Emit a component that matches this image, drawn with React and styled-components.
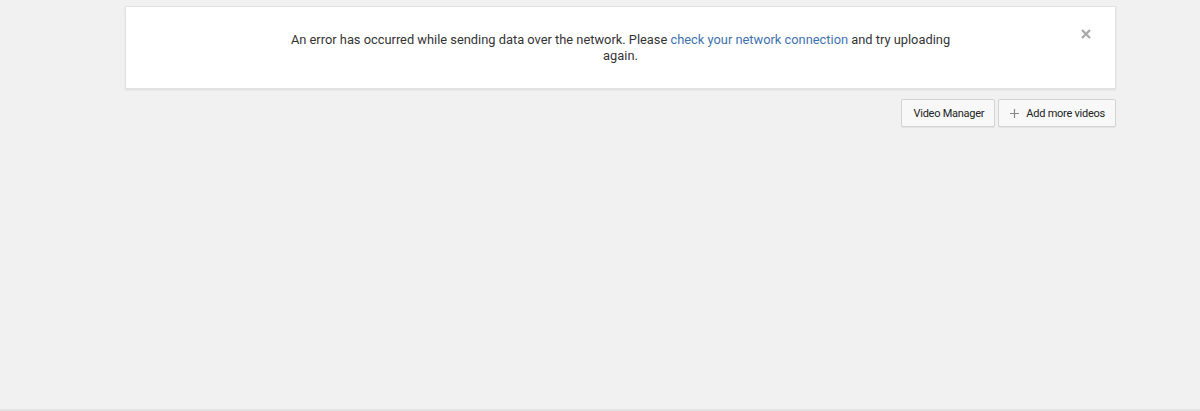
import React from 'react';
import styled, { createGlobalStyle } from 'styled-components';

const GlobalStyle = createGlobalStyle`
    html, body {
        margin: 0;
        padding: 0;
        background: #f1f1f1;
        font-family: Roboto, Arial, sans-serif;
    }
`

const Page = styled.div`
    box-sizing: border-box;
    height: 411px;
    padding: 6px 0 0 125px;
    border-bottom: 2px solid #e3e3e3;
`

const Column = styled.div`
    width: 991px;
    display: flex;
    flex-direction: column;
    gap: 10px;
`

const Notice = styled.div`
    position: relative;
    box-sizing: border-box;
    height: 83px;
    background: #fff;
    border: 1px solid #e2e2e2;
    box-shadow: 0 1px 2px rgba(0, 0, 0, 0.1);
    display: flex;
    justify-content: center;
    padding-top: 25px;
`

const Message = styled.p`
    margin: 0;
    width: 675px;
    font-size: 12.85px;
    line-height: 16px;
    color: #333;
    text-align: center;
`

const Link = styled.a`
    color: #3d72b0;
    text-decoration: none;
`

const Close = styled.button`
    position: absolute;
    top: 20px;
    right: 22px;
    border: 0;
    padding: 0;
    background: none;
    cursor: pointer;
    width: 14px;
    height: 14px;
`

const Actions = styled.div`
    display: flex;
    justify-content: flex-end;
    gap: 3px;
`

const Button = styled.button`
    box-sizing: border-box;
    height: 28px;
    padding: 0 10px 0 11px;
    display: flex;
    align-items: center;
    gap: 7px;
    background: #f8f8f8;
    border: 1px solid #d3d3d3;
    border-radius: 2px;
    box-shadow: 0 1px 0 rgba(0, 0, 0, 0.05);
    font-family: Roboto, Arial, sans-serif;
    font-size: 11px;
    letter-spacing: -0.25px;
    font-weight: 400;
    color: #222;
`

export default function App()
{
    return (
        <>
            <GlobalStyle/>
            <Page>
                <Column>
                    <Notice>
                        <Message>
                            An error has occurred while sending data over the network. Please <Link href="#">check your network connection</Link> and try uploading again.
                        </Message>
                        <Close aria-label="Close">
                            <svg width="14" height="14" viewBox="0 0 14 14">
                                <path d="M3 3 L11 11 M11 3 L3 11" stroke="#aaa" strokeWidth="2.4"/>
                            </svg>
                        </Close>
                    </Notice>
                    <Actions>
                        <Button>Video Manager</Button>
                        <Button>
                            <svg width="9" height="9" viewBox="0 0 9 9">
                                <path d="M4.5 0 V9 M0 4.5 H9" stroke="#888" strokeWidth="1.2"/>
                            </svg>
                            Add more videos
                        </Button>
                    </Actions>
                </Column>
            </Page>
        </>
    )
}
